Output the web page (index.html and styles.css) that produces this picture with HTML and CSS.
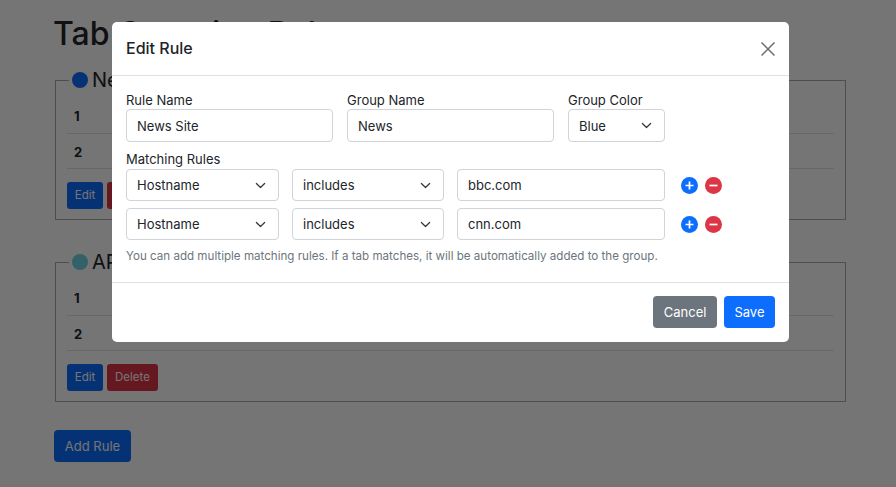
FILE: index.html
```html
<!DOCTYPE html>
<html lang="en">
<head>
  <meta charset="UTF-8" />
  <title>Tab Grouping Rules</title>
  <link rel="stylesheet" href="styles.css">
</head>
<body>
  <h1 class="page-title">Tab Grouping Rules</h1>

  <fieldset class="rule-box">
    <legend class="rule-legend"><span class="dot dot-blue"></span>News Site</legend>
    <table class="rule-table">
      <tr><th>1</th><td></td></tr>
      <tr><th>2</th><td></td></tr>
    </table>
    <div class="rule-actions">
      <button class="btn btn-sm btn-primary">Edit</button>
      <button class="btn btn-sm btn-danger">Delete</button>
    </div>
  </fieldset>

  <fieldset class="rule-box">
    <legend class="rule-legend"><span class="dot dot-cyan"></span>API Docs</legend>
    <table class="rule-table">
      <tr><th>1</th><td></td></tr>
      <tr><th>2</th><td></td></tr>
    </table>
    <div class="rule-actions">
      <button class="btn btn-sm btn-primary">Edit</button>
      <button class="btn btn-sm btn-danger">Delete</button>
    </div>
  </fieldset>

  <button class="btn btn-primary btn-add">Add Rule</button>

  <div class="backdrop"></div>

  <div class="modal">
    <div class="modal-header">
      <h5 class="modal-title">Edit Rule</h5>
      <svg class="close-icon" width="14" height="14" viewBox="0 0 14 14"><path d="M.5.5l13 13M13.5.5l-13 13" stroke="#6e6e6e" stroke-width="1.5" fill="none"/></svg>
    </div>
    <div class="modal-body">
      <div class="field-row">
        <div class="field field-name">
          <label class="field-label">Rule Name</label>
          <input class="control" type="text" value="News Site" />
        </div>
        <div class="field field-name">
          <label class="field-label">Group Name</label>
          <input class="control" type="text" value="News" />
        </div>
        <div class="field field-color">
          <label class="field-label">Group Color</label>
          <select class="control control-select"><option>Blue</option></select>
        </div>
      </div>

      <label class="field-label">Matching Rules</label>
      <div class="match-row">
        <select class="control control-select match-type"><option>Hostname</option></select>
        <select class="control control-select match-op"><option>includes</option></select>
        <input class="control match-value" type="text" value="bbc.com" />
        <div class="match-actions">
          <svg class="round-icon" width="17" height="17" viewBox="0 0 17 17"><circle cx="8.5" cy="8.5" r="8.5" fill="#0d6efd"/><path d="M8.5 4.5v8M4.5 8.5h8" stroke="#fff" stroke-width="1.7"/></svg>
          <svg class="round-icon" width="17" height="17" viewBox="0 0 17 17"><circle cx="8.5" cy="8.5" r="8.5" fill="#dc3545"/><path d="M4.5 8.5h8" stroke="#fff" stroke-width="1.7"/></svg>
        </div>
      </div>
      <div class="match-row">
        <select class="control control-select match-type"><option>Hostname</option></select>
        <select class="control control-select match-op"><option>includes</option></select>
        <input class="control match-value" type="text" value="cnn.com" />
        <div class="match-actions">
          <svg class="round-icon" width="17" height="17" viewBox="0 0 17 17"><circle cx="8.5" cy="8.5" r="8.5" fill="#0d6efd"/><path d="M8.5 4.5v8M4.5 8.5h8" stroke="#fff" stroke-width="1.7"/></svg>
          <svg class="round-icon" width="17" height="17" viewBox="0 0 17 17"><circle cx="8.5" cy="8.5" r="8.5" fill="#dc3545"/><path d="M4.5 8.5h8" stroke="#fff" stroke-width="1.7"/></svg>
        </div>
      </div>
      <p class="help-text">You can add multiple matching rules. If a tab matches, it will be automatically added to the group.</p>
    </div>
    <div class="modal-footer">
      <button class="btn btn-secondary">Cancel</button>
      <button class="btn btn-primary">Save</button>
    </div>
  </div>
</body>
</html>
```

FILE: styles.css
```css
* {
  box-sizing: border-box;
}
body {
  margin: 0;
  padding: 14px 50px 0 53px;
  height: 487px;
  overflow: hidden;
  font-family: Inter, "Liberation Sans", sans-serif;
  font-size: 13px;
  color: #212529;
  background: #fff;
}
.page-title {
  margin: 0 0 15px;
  font-size: 32px;
  font-weight: 500;
  line-height: 39px;
}
.rule-box {
  width: 791px;
  height: 152px;
  margin: 0 0 30px 2px;
  padding: 0 11px;
  border: 1px solid #aaa;
}
.rule-box + .rule-box {
  margin-bottom: 28px;
}
.rule-legend {
  padding: 0 3px;
  margin-left: 2px;
  font-size: 20px;
  line-height: 24px;
  display: flex;
  align-items: center;
  gap: 4px;
}
.dot {
  width: 16px;
  height: 16px;
  border-radius: 50%;
}
.dot-blue {
  background: #0d6efd;
}
.dot-cyan {
  background: #6fd3e0;
}
.rule-table {
  width: 100%;
  border-collapse: collapse;
  margin: 6px 0 13px;
}
.rule-table th,
.rule-table td {
  height: 35px;
  padding: 2px 7px 0;
  text-align: left;
  border-bottom: 1px solid #dee2e6;
}
.rule-table th {
  width: 40px;
}
.rule-actions {
  display: flex;
  gap: 4px;
}
.btn {
  height: 32px;
  padding: 0 9.5px;
  border: 1px solid transparent;
  border-radius: 4px;
  font-family: inherit;
  font-size: 13px;
  color: #fff;
  white-space: nowrap;
}
.btn-sm {
  height: 27px;
  padding: 0;
  width: 51px;
  font-size: 11.5px;
  border-radius: 3px;
}
.btn-sm.btn-primary {
  width: 36px;
}
.btn-primary {
  background: #0d6efd;
}
.btn-danger {
  background: #dc3545;
}
.btn-secondary {
  background: #6c757d;
}
.btn-add {
  display: block;
  width: 77px;
  margin-left: 1px;
  padding: 0;
}
.backdrop {
  position: absolute;
  inset: 0;
  background: rgba(0, 0, 0, 0.54);
}
.modal {
  position: absolute;
  left: 112px;
  top: 22px;
  width: 677px;
  height: 320px;
  background: #fff;
  border-radius: 5px;
  display: flex;
  flex-direction: column;
}
.modal-header {
  height: 54px;
  flex: none;
  padding: 0 14px;
  display: flex;
  align-items: center;
  justify-content: space-between;
  border-bottom: 1px solid #dee2e6;
}
.modal-title {
  margin: 0 0 1px;
  font-size: 16px;
  font-weight: 500;
}
.modal-body {
  flex: 1;
  padding: 16px 14px 0;
}
.field-row {
  display: flex;
  gap: 14px;
  margin-bottom: 9px;
}
.field-name {
  width: 207px;
}
.field-color {
  width: 97px;
}
.field-label {
  display: block;
  height: 17px;
  line-height: 16px;
  font-size: 13px;
}
.control {
  display: block;
  width: 100%;
  height: 33px;
  padding: 0 10px;
  border: 1px solid #ced4da;
  border-radius: 4px;
  font-family: inherit;
  font-size: 13px;
  color: #212529;
  background: #fff;
}
.control-select {
  appearance: none;
  padding-right: 28px;
  background: #fff url("data:image/svg+xml,%3csvg xmlns='http://www.w3.org/2000/svg' viewBox='0 0 16 16'%3e%3cpath fill='none' stroke='%23343a40' stroke-linecap='round' stroke-linejoin='round' stroke-width='1.8' d='M2 5l6 6 6-6'/%3e%3c/svg%3e") no-repeat right 12.5px center / 10.5px 10.5px;
}
.match-row {
  display: flex;
  align-items: center;
  margin: 1px 0 7px;
}
.match-row .control {
  height: 32px;
}
.match-type {
  width: 153px;
  margin-right: 13px;
}
.match-op {
  width: 152px;
  margin-right: 13px;
}
.match-value {
  width: 208px;
  margin-right: 16px;
}
.match-actions {
  display: flex;
  gap: 7px;
}
.help-text {
  margin: 9px 0 0;
  font-size: 11.6px;
  line-height: 14px;
  color: #6c757d;
}
.modal-footer {
  height: 60px;
  flex: none;
  padding: 13px 14px;
  display: flex;
  justify-content: flex-end;
  align-items: flex-start;
  gap: 7px;
  border-top: 1px solid #dee2e6;
}
```
